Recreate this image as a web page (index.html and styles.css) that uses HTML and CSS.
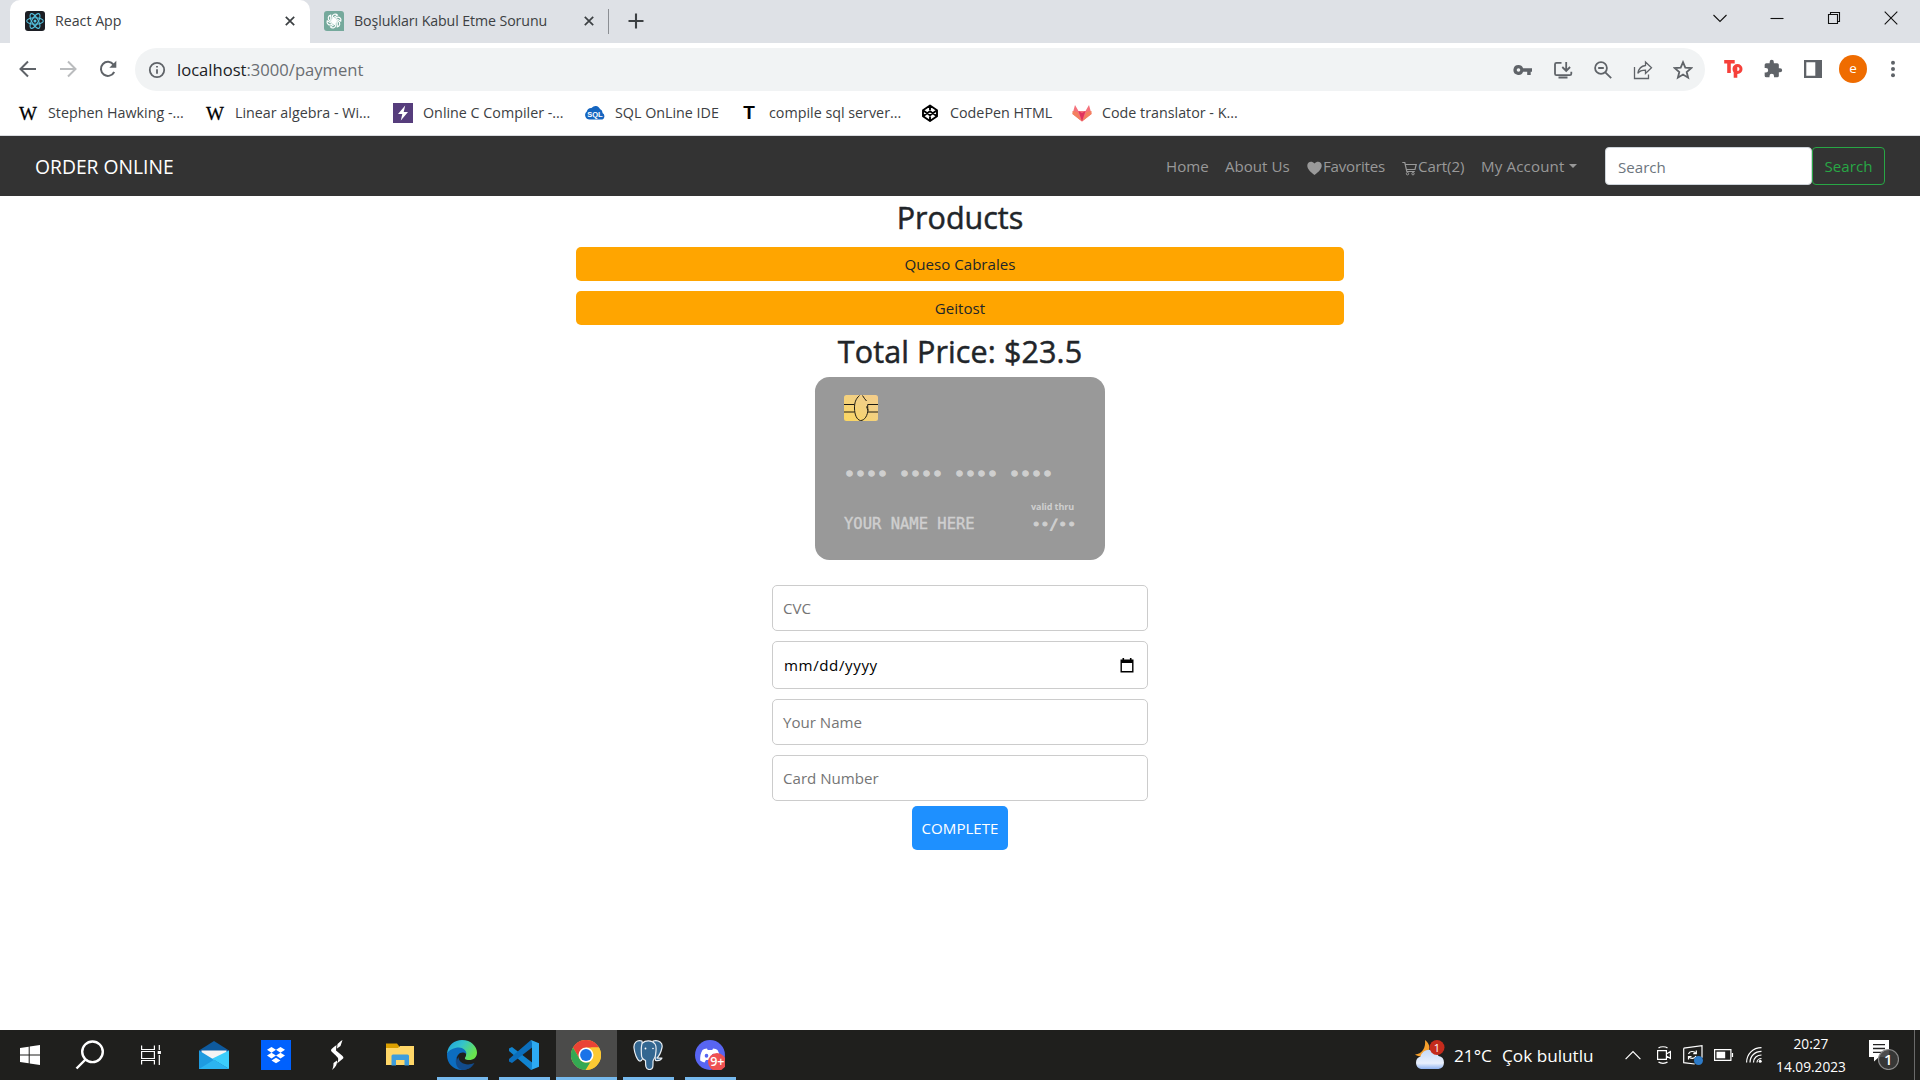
FILE: index.html
```html
<!DOCTYPE html>
<html lang="en">
<head>
<meta charset="utf-8">
<title>React App</title>
<link rel="stylesheet" href="styles.css">
</head>
<body>
<div class="tabstrip">
  <div class="tab active">
    <svg class="fav" viewBox="0 0 20 20"><rect width="20" height="20" rx="3" fill="#1c1e24"/><g fill="none" stroke="#53c1de" stroke-width="1.1"><ellipse cx="10" cy="10" rx="8.3" ry="3.2"/><ellipse cx="10" cy="10" rx="8.3" ry="3.2" transform="rotate(60 10 10)"/><ellipse cx="10" cy="10" rx="8.3" ry="3.2" transform="rotate(120 10 10)"/></g><circle cx="10" cy="10" r="1.5" fill="#53c1de"/></svg>
    <span class="tab-title">React App</span>
    <svg class="x" viewBox="0 0 10 10"><path d="M.8.8l8.4 8.4M9.2.8L.8 9.2"/></svg>
  </div>
  <div class="tab second">
    <svg class="fav" viewBox="0 0 20 20"><path d="M3 0h14a3 3 0 0 1 3 3v17H3a3 3 0 0 1-3-3V3a3 3 0 0 1 3-3z" fill="#75a99c"/><g fill="none" stroke="#fff" stroke-width="1.15"><path id="k" d="M8.2 11.1V6.2a3 3 0 0 1 5.3-2l-4 2.4v4.7"/><use href="#k" transform="rotate(60 10 10)"/><use href="#k" transform="rotate(120 10 10)"/><use href="#k" transform="rotate(180 10 10)"/><use href="#k" transform="rotate(240 10 10)"/><use href="#k" transform="rotate(300 10 10)"/></g></svg>
    <span class="tab-title">Boşlukları Kabul Etme Sorunu</span>
    <svg class="x" viewBox="0 0 10 10"><path d="M.8.8l8.4 8.4M9.2.8L.8 9.2"/></svg>
  </div>
  <span class="tab-sep"></span>
  <svg class="plus" viewBox="0 0 16 16"><path d="M8 .5v15M.5 8h15"/></svg>
  <div class="winctl">
    <svg viewBox="0 0 14 14"><path d="M.5 4L7 10.500 13.500 4"/></svg>
    <svg viewBox="0 0 14 14"><path d="M.5 7.500h13"/></svg>
    <svg viewBox="0 0 14 14"><path d="M1.500 3.500h9v9h-9zM3.500 3.500v-2h9v9h-2"/></svg>
    <svg viewBox="0 0 14 14"><path d="M.7.700l12.600 12.600M13.300.7L.7 13.300"/></svg>
  </div>
</div>
<div class="toolbar">
  <svg class="nav-ic" viewBox="0 0 20 20"><path d="M18 10H3M10 2.500L2.500 10l7.500 7.500"/></svg>
  <svg class="nav-ic off" viewBox="0 0 20 20"><path d="M2 10h15M10 2.500l7.500 7.500-7.500 7.500"/></svg>
  <svg class="nav-ic" viewBox="0 0 20 20"><path d="M16.200 13A7 7 0 1 1 15.500 5.600"/><path d="M18.300 1.800v7h-7z" fill="#5f6368" stroke="none"/></svg>
  <div class="omnibox">
    <svg class="info" viewBox="0 0 18 18"><circle cx="9" cy="9" r="7.200"/><path d="M9 8.200v4.500M9 5v1.600"/></svg>
    <span class="url"><b>localhost</b>:3000/payment</span>
    <div class="omni-actions">
      <svg viewBox="0 0 20 20"><path d="M5.500 5a5 5 0 0 1 4.600 3.200H19v3.600h-1.300V15h-3.500v-3.200h-4.100A5 5 0 1 1 5.500 5zm0 3.200a1.800 1.800 0 1 0 0 3.600 1.800 1.800 0 0 0 0-3.600z" fill="#5f6368" stroke="none" fill-rule="evenodd"/></svg>
      <svg viewBox="0 0 20 20"><path d="M8.500 2.800H3.500a1.500 1.500 0 0 0-1.500 1.500v9.400a1.500 1.500 0 0 0 1.500 1.500h13.300a1.500 1.500 0 0 0 1.500-1.500v-2M13.200 2v8M9.300 7l3.900 3.900L17.100 7M5.500 17.500h9"/></svg>
      <svg viewBox="0 0 20 20"><circle cx="8" cy="8" r="5.900"/><path d="M12.300 12.300l5.900 5.900M5.200 8h5.600"/></svg>
      <svg viewBox="0 0 20 20" class="thin"><path d="M1.500 7v11.500h14v-4M12.500 2l6 5.800-6 5.700v-3.400c-3.500 0-6 .7-7.700 3.200.7-4 3.200-7.200 7.700-7.800z"/></svg>
      <svg viewBox="0 0 20 20"><path d="M10 2.200l2.300 5.400 5.900.5-4.500 3.900 1.400 5.700L10 14.600l-5.100 3.100L6.300 12 1.800 8.100l5.900-.5z"/></svg>
    </div>
  </div>
  <svg class="ext" viewBox="0 0 20 20"><path d="M1.200 2.800h10.500M6 2.800V14M12.500 18.800V7" stroke="#f6403a" stroke-width="3.600" fill="none"/><circle cx="14.500" cy="10" r="3.500" stroke="#f6403a" stroke-width="3" fill="none"/></svg>
  <svg class="ext" viewBox="0 0 24 24"><path fill="#5f6368" d="M20.500 11H19V7a2 2 0 0 0-2-2h-4V3.500a2.500 2.500 0 0 0-5 0V5H4a2 2 0 0 0-2 2v3.800h1.500a2.700 2.700 0 0 1 0 5.400H2V20a2 2 0 0 0 2 2h3.800v-1.500a2.700 2.700 0 0 1 5.400 0V22H17a2 2 0 0 0 2-2v-4h1.500a2.500 2.500 0 0 0 0-5z"/></svg>
  <svg class="ext" viewBox="0 0 20 20"><path fill="#5f6368" fill-rule="evenodd" d="M1 1h18v18H1zm2.300 2.300v13.400h9V3.300z"/></svg>
  <span class="avatar">e</span>
  <svg class="ext" viewBox="0 0 20 20"><g fill="#5f6368"><circle cx="10" cy="3.700" r="2"/><circle cx="10" cy="10" r="2"/><circle cx="10" cy="16.300" r="2"/></g></svg>
</div>
<div class="bookmarks">
  <div class="bm b1"><span class="bi wiki">W</span><span class="bt">Stephen Hawking -...</span></div>
  <div class="bm b2"><span class="bi wiki">W</span><span class="bt">Linear algebra - Wi...</span></div>
  <div class="bm b3"><svg class="bi" viewBox="0 0 20 20"><path fill="#563d7c" d="M0 0h20v20H0z"/><path fill="#fff" d="M12.200 2.500L5 11h4.300l-1.500 6.500L15 9h-4.300z"/></svg><span class="bt">Online C Compiler -...</span></div>
  <div class="bm b4"><svg class="bi" viewBox="0 0 20 20"><path fill="#1565c0" d="M4.500 16.500a4.500 4.500 0 0 1-2.700-8A4.500 4.500 0 0 1 6.500 5a5 5 0 0 1 8.500 1 4 4 0 0 1 2.500 4 3.700 3.700 0 0 1 0 6.500z"/><text x="10" y="14" text-anchor="middle" class="sqltxt">SQL</text></svg><span class="bt">SQL OnLine IDE</span></div>
  <div class="bm b5"><span class="bi tee">T</span><span class="bt">compile sql server...</span></div>
  <div class="bm b6"><svg class="bi" viewBox="0 0 20 20"><path d="M10 2.500l7 4.800v5.900l-7 4.800-7-4.800V7.300zM10 2.500v4.500M10 13.400v4.400M3 7.300l7 5 7-5M3 13.200l7-5 7 5" fill="none" stroke="#000" stroke-width="1.900" stroke-linejoin="round"/></svg><span class="bt">CodePen HTML</span></div>
  <div class="bm b7"><svg class="bi" viewBox="0 0 20 20"><path fill="#f4717b" d="M3 2l3.500 6h7L17 2l2.500 9L10 18.500.5 11z"/><path fill="#f3805f" d="M.5 8l5 1L10 18.500.5 11zM19.500 8l-5 1L10 18.500l9.500-7.500z"/><path fill="#e0325e" d="M6.500 8L10 10l3.500-2L10 18.500z"/></svg><span class="bt">Code translator - K...</span></div>
</div>
<nav class="navbar">
  <span class="brand">ORDER ONLINE</span>
  <div class="links">
    <a class="l1">Home</a>
    <a class="l2">About Us</a>
    <a class="l3"><svg viewBox="0 0 15 16"><path fill="#999" d="M7.500 15C3 11.500.3 9 .3 5.500.3 1.500 5 .5 7.500 3.500 10 .5 14.700 1.500 14.700 5.500c0 3.500-2.700 6-7.200 9.500z"/></svg><span>Favorites</span></a>
    <a class="l4"><svg viewBox="0 0 15 16"><path fill="none" stroke="#999" stroke-width="1.200" d="M.3 2.500h2.500l2 9h8M3.300 4.500h10.900l-1.200 5H4.500"/><circle cx="5.500" cy="13.700" r="1.200" fill="none" stroke="#999"/><circle cx="11" cy="13.700" r="1.200" fill="none" stroke="#999"/></svg><span>Cart(2)</span></a>
    <a class="l5"><span>My Account</span><i class="caret"></i></a>
  </div>
  <div class="search"><span class="s-in">Search</span><span class="s-btn">Search</span></div>
</nav>
<main class="page">
  <h2 class="h-prod">Products</h2>
  <div class="bar">Queso Cabrales</div>
  <div class="bar">Geitost</div>
  <h2 class="h-total">Total Price: $23.5</h2>
  <div class="card">
    <svg class="chip" viewBox="0 0 34 26"><defs><linearGradient id="cg" x1="0" y1="1" x2="1" y2="0"><stop offset="0" stop-color="#fcd75f"/><stop offset=".6" stop-color="#f2d083"/><stop offset="1" stop-color="#f5cd8a"/></linearGradient></defs><rect width="34" height="26" rx="2.500" fill="url(#cg)"/><path d="M0 9.500h10.500M0 17h10.500M34 9.500H23.700V13M34 17H24M15.500.5C11.500 4 10.500 8 10.500 13c0 7 2.500 12 6 12.500 4 .2 7.500-5 7.500-12M18.500.5c1 2 2.500 3.500 4 5.500M22.500 11.500l1.500 4" fill="none" stroke="#1c1a12" stroke-width="1"/></svg>
    <div class="number">•••• •••• •••• ••••</div>
    <div class="card-row">
      <span class="name">YOUR NAME HERE</span>
      <span class="expiry"><small>valid thru</small><span>••/••</span></span>
    </div>
  </div>
  <form class="form">
    <div class="field"><span>CVC</span></div>
    <div class="field date"><span>mm/dd/yyyy</span><svg viewBox="0 0 14 15"><path fill="#000" fill-rule="evenodd" d="M2.500 0h1.600v1.500h5.800V0h1.600v1.500h2v13H.5v-13h2zM1.900 5v8.100h10.200V5z"/></svg></div>
    <div class="field"><span>Your Name</span></div>
    <div class="field"><span>Card Number</span></div>
    <div class="submit"><span>COMPLETE</span></div>
  </form>
</main>
<footer class="taskbar">
  <div class="slot"><svg class="w20" viewBox="0 0 20 20"><path fill="#fff" d="M0 3l8.700-1.300v7.800H0zM9.700 1.500L20 0v9.500H9.700zM0 10.500h8.700v7.800L0 17zM9.700 10.500H20V20L9.700 18.500z"/></svg></div>
  <div class="slot"><svg class="w30" viewBox="0 0 30 30"><g fill="none" stroke="#fff" stroke-width="2.400"><circle cx="17.500" cy="11.800" r="10.300"/><path d="M10.500 19.500L1.500 28.500"/></g></svg></div>
  <div class="slot left"><svg class="w20" viewBox="0 0 20 20"><g fill="none" stroke="#fff" stroke-width="1.200"><path d="M.6.500v4h12.800v-4M.6 19.500v-4h12.800v4M.6 6.500h12.800v7H.6zM18.300 0v5M18.300 10v10"/></g><path fill="#fff" d="M16.700 6h3.200v3h-3.200z"/></svg></div>
  <div class="slot"><svg class="w30" viewBox="0 0 30 30"><path fill="#0e5a9e" d="M0 10.500L15 1l15 9.500V20H0z"/><path fill="#f4f4f4" d="M2.500 10.500h25v9h-25z"/><path fill="#1e9be0" d="M0 10.500L30 29H0z"/><path fill="#3bcdfb" d="M30 10.500V29L13 18.700z"/><path fill="#2cb4f0" d="M15 19.800L30 29H0z"/></svg></div>
  <div class="slot"><svg class="w30" viewBox="0 0 30 30"><path fill="#0061fe" d="M0 0h30v30H0z"/><path fill="#fff" d="M10.500 7l4.500 2.800-4.500 2.900L6 9.800zM19.500 7L24 9.800l-4.500 2.900L15 9.800zM10.500 12.700l4.500 2.800-4.500 2.900L6 15.500zM19.500 12.700l4.500 2.800-4.500 2.900-4.500-2.900zM15 17.800l4.500 2.600L15 23.300l-4.500-2.900z"/></svg></div>
  <div class="slot left"><svg class="w30" viewBox="0 0 30 30"><path fill="#fff" d="M20.500 0C19 1 17 2.500 15.500 4l-.5 4.500 3.500-2.500zM14.500 5C11 7.500 9 9 9 10.500c0 1.200 6 5.500 7 7.500.5 1.500 0 3.500-1 5.500l5.500-4.500c1.500-1.200 1-2-.5-3.500l-6-5zM10 30c4-3 5.300-6 5-9.500l-3.500 2.500C11.500 26 11 28 10 30z"/></svg></div>
  <div class="slot"><svg class="w30" viewBox="0 0 30 30"><path fill="#dca000" d="M1 3.500h11l2 2.500v5H1z"/><path fill="#ffd768" d="M1 8h12l2-2h14v19H1z"/><path fill="#3e9ddc" d="M6.500 25.500V16q0-1.500 1.500-1.500h14.500q1.500 0 1.500 1.500v9.500h-4.500v-5.500h-8.500v5.500z"/></svg></div>
  <div class="slot on"><svg class="w30" viewBox="0 0 30 30"><defs><linearGradient id="e1" x1="0" y1="0" x2="1" y2=".5"><stop offset="0" stop-color="#1b9de2"/><stop offset=".5" stop-color="#35c4c9"/><stop offset="1" stop-color="#69e44d"/></linearGradient></defs><path fill="url(#e1)" d="M0 13.500C1 5 7.500 0 15 0c9 0 15 6.500 15 12.500 0 5-3.500 7.500-8 7.500-3.500 0-5-1.300-3.500-3 2-3-.5-7-5.500-7-6 0-11 3-13 3.500z"/><path fill="#0c6dc0" d="M0 13.500C2 10 7 7.500 12 7.500c4 0 7.500 3 7.500 6.500-5-4-10 .5-10 5.500 0 6 5 9.500 8.500 10.300C8 31.500 0 24.500 0 15z"/><path fill="#164e8e" d="M12.500 13.500c-4 3-3.500 9 0 12.500s10 4 15.500-2.500C24.500 28 19 30.500 15 30 8 29 6.500 17.500 12.500 13.500z"/><path fill="#124b8c" d="M11.500 17c0 6 8 9.500 16 6-3 5-8 7-11.500 7-6-1-8-9-4.500-13z"/></svg></div>
  <div class="slot on"><svg class="w30" viewBox="0 0 30 30"><path fill="#1184d0" d="M0 8.500L3 7l22 17-3 6L0 11z"/><path fill="#0b6ebc" d="M0 21.500L3 23 25 6l-3-6L0 19z"/><path fill="#2daaf2" d="M22 0l8 3.200v23.600L22 30l1-3V3z"/></svg></div>
  <div class="slot on current"><svg class="w30" viewBox="0 0 30 30"><circle cx="15" cy="15" r="15" fill="#fcc934"/><path fill="#ea4335" d="M2 7.500A15 15 0 0 1 28 7.500H15L8.500 18.700z"/><path fill="#34a853" d="M2 7.500l6.500 11.200c2 3.500 4.500 4 8 3.800H21.500L15 30A15 15 0 0 1 2 7.500z"/><path fill="#fcc934" d="M28 7.500A15 15 0 0 1 14.500 30l7-11.200c1.500-3 1.500-7-1.500-11.300z"/><circle cx="15" cy="15" r="7.500" fill="#fff"/><circle cx="15" cy="15" r="5.900" fill="#1a73e8"/></svg></div>
  <div class="slot on"><svg class="w30" viewBox="0 0 30 30"><g fill="#336791" stroke="#e8eef3" stroke-width="1.200" stroke-linejoin="round"><path d="M9 1C3.500-.5.500 3 1 8c.5 5 3 12 5.500 13 2 .8 3-2 4-4z"/><path d="M20 1c6-1.500 10 2 9 6.500-1 5-4 9.500-5 10.500 1.500.5 3.500 0 5 0-1 2-4 3-6.500 2.500z"/><path d="M9.500 3c3-3 9.500-3 12.500 1 1.500 2 1 8 .5 11-.5 4-2.500 4-2.500 6.500 0 4 .5 8-3.500 8s-4-4-4-9c-2-1-4-2.500-4-5s-1-9.500 1-12.500z"/></g><circle cx="12.500" cy="8.500" r=".9" fill="#fff"/><circle cx="20" cy="8.500" r=".8" fill="#fff"/></svg></div>
  <div class="slot on"><svg class="w30" viewBox="0 0 30 30"><circle cx="15" cy="15" r="15" fill="#5865f2"/><path fill="#fff" d="M12 8.500c-2 .3-3.500.8-4.500 1.500C5.500 13 5 17 5.200 20.500c1.300 1 2.800 1.500 4.300 2l1.500-2.500h8l1.500 2.500c1.500-.5 3-1 4.300-2 .2-3.500-.3-7.500-2.300-10.500-1-.7-2.500-1.200-4.500-1.500l-.7 1.500h-4.600z"/><ellipse cx="11.500" cy="15.800" rx="1.800" ry="2" fill="#5865f2"/><ellipse cx="18.500" cy="15.800" rx="1.800" ry="2" fill="#5865f2"/><circle cx="22" cy="22" r="9" fill="#ee5152"/><text x="22.300" y="26.300" text-anchor="middle" class="nine">9+</text></svg></div>
  <div class="tray">
    <svg class="weather" viewBox="0 0 32 30"><defs><linearGradient id="cl" x1="0" y1="0" x2="0" y2="1"><stop offset="0" stop-color="#c5daf8"/><stop offset=".7" stop-color="#e9f0fd"/><stop offset="1" stop-color="#8eb2f0"/></linearGradient></defs><path fill="#f6a02c" d="M11 0c6 4 6 12-1 16-4 1-7 0-9-1.500C8 14 12 8 11 0z"/><path fill="url(#cl)" d="M7 29a6.500 6.500 0 0 1-.5-12.500A9.500 9.500 0 0 1 24.500 16 6.600 6.600 0 0 1 24.500 29z"/><circle cx="23" cy="7.500" r="7.500" fill="#c42b1c"/><text x="23" y="11.500" text-anchor="middle" class="one">1</text></svg>
    <span class="temp">21°C</span><span class="cond">Çok bulutlu</span>
    <svg class="chev" viewBox="0 0 16 10"><path d="M.6 9.200L8 1.500l7.400 7.700"/></svg>
    <svg class="meet" viewBox="0 0 14 18"><path d="M.6 4.700h8.800v8.600H.6zM9.400 8l4-2.500v7l-4-2.500M1.500 2C3.500.3 8.500.3 10.500 2M1.500 16c2 1.700 7 1.700 9 0"/></svg>
    <svg class="sync" viewBox="0 0 20 20"><path d="M.7 3.200L19 .7v12M.7 3.200v14.500l11 1.300M5.500 9C6.500 6 11 5.500 13 8.500M13.300 5.500v3.200h-3M13 11c-1.500 3-5.500 3.200-7.200.5M5.500 14.500v-3h3"/><circle cx="15.500" cy="15.500" r="4.500" fill="#2d7bc8" stroke="none"/></svg>
    <svg class="batt" viewBox="0 0 20 12"><path d="M.6.700h16.300v10.600H.6zM18.500 4v4"/><path d="M2.500 2.700h8.700v6.600H2.500z" fill="#fff" stroke="none"/></svg>
    <svg class="wifi" viewBox="0 0 16 16"><path d="M.6 15.500C.6 7 7 .6 15.500.6M4 15.500C4 9 9 4.300 15.500 4.300M7.500 15.500c0-4.500 3.500-7.500 8-7.500M11 15.500c0-2.300 2-4 4.500-4"/><circle cx="14.200" cy="14.200" r="1.500" fill="#fff" stroke="none"/></svg>
    <div class="clock"><span>20:27</span><span>14.09.2023</span></div>
    <svg class="act" viewBox="0 0 30 30"><path fill="#fff" d="M0 0h20v17H10l-5 4.500V17H0z"/><path d="M4 4.700h12M4 8.500h12M4 12.300h9" stroke="#222" stroke-width="1.300"/><circle cx="19.500" cy="19.500" r="10" fill="#3a3a3a" fill-opacity=".9" stroke="#8a8a8a"/><text x="19.300" y="25" text-anchor="middle" class="cnt">1</text></svg>
    <span class="desk"></span>
  </div>
</footer>
</body>
</html>
```
FILE: styles.css
```css
* { box-sizing: border-box; }
body {
  margin: 0;
  width: 1920px;
  height: 1080px;
  overflow: hidden;
  display: flex;
  flex-direction: column;
  background: #fff;
  font-family: "Open Sans", "Noto Sans", sans-serif;
  color: #212529;
}
svg { display: block; flex: none; }
span { white-space: nowrap; }

/* tab strip */
.tabstrip { height: 43px; flex: none; display: flex; background: #dee1e6; padding-left: 10px; }
.tab { width: 299px; height: 43px; display: flex; align-items: center; padding: 0 14px 2px 14px; font-size: 14.2px; color: #3c4043; }
.tab.active { width: 300px; padding-left: 15px; background: #fff; border-radius: 10px 10px 0 0; }
.second .tab-title { letter-spacing: -0.1px; }
.fav { width: 20px; height: 20px; margin-right: 10px; }
.x { width: 10px; height: 10px; margin-left: auto; margin-right: 1px; stroke: #3c4043; stroke-width: 1.7; fill: none; }
.tab-sep { width: 1px; height: 25px; margin: 9px 19px 0 -1px; background: #8b8e93; }
.plus { width: 16px; height: 16px; margin-top: 13px; stroke: #3c4043; stroke-width: 2.1; }
.winctl { margin-left: auto; margin-right: 22px; padding-top: 11px; display: flex; gap: 43px; }
.winctl svg { width: 14px; height: 14px; fill: none; stroke: #111; stroke-width: 1.1; }

/* toolbar */
.toolbar { height: 52px; flex: none; display: flex; align-items: center; padding: 0 17px 0 18px; }
.nav-ic { width: 20px; height: 20px; margin-right: 20px; fill: none; stroke: #5f6368; stroke-width: 2; }
.nav-ic.off { stroke: #babcbe; }
.nav-ic:nth-child(3) { margin-right: 17px; }
.omnibox { width: 1570px; height: 43px; flex: none; margin-top: 1px; border-radius: 22px; background: #f1f3f4; display: flex; align-items: center; padding: 0 12px 0 13px; }
.info { width: 18px; height: 18px; fill: none; stroke: #5f6368; stroke-width: 1.8; }
.url { margin-left: 11px; font-size: 16.6px; color: #6a6e72; }
.url b { font-weight: 400; color: #202124; }
.omni-actions { margin-left: auto; display: flex; gap: 20px; }
.omni-actions svg { width: 20px; height: 20px; fill: none; stroke: #5f6368; stroke-width: 1.8; }
.omni-actions .thin { stroke-width: 1.3; }
.ext { width: 20px; height: 20px; margin-left: 20px; }
.omnibox + .ext { margin-left: 18px; }
.avatar { width: 28px; height: 28px; flex: none; margin: 0 -4px 0 16px; border-radius: 50%; background: #ef6c00; color: #fff; font-size: 13.5px; line-height: 26px; text-align: center; }

/* bookmarks */
.bookmarks { height: 41px; flex: none; display: flex; align-items: center; padding: 0 0 5px 18px; border-bottom: 1px solid #dadce0; font-size: 14.3px; color: #3c4043; }
.bm { display: flex; align-items: center; gap: 10px; }
.bt { margin-top: -1px; }
.bi { width: 20px; height: 20px; flex: none; line-height: 20px; text-align: center; color: #000; }
.wiki { font: 19px/21px "Liberation Serif", serif; -webkit-text-stroke: 0.3px #000; }
.tee { font: 700 19px/20px "Liberation Sans", sans-serif; }
.sqltxt { font: 700 7.5px "Liberation Sans", sans-serif; fill: #fff; }
.b1 { width: 187px; }
.b2 { width: 188px; }
.b3 { width: 192px; }
.b4 { width: 154px; }
.b5 { width: 181px; }
.b6 { width: 152px; }

/* site navbar */
.navbar { height: 60px; flex: none; background: #333; display: flex; align-items: center; padding: 0 35px; }
.brand { color: #fff; font-size: 19.3px; }
.links { margin-left: auto; display: flex; color: #999; font-size: 15.1px; }
.links a { display: flex; align-items: center; white-space: nowrap; }
.links svg { width: 15px; height: 16px; margin: 3px 1px 0 0; }
.l1 { width: 59px; }
.l2 { width: 82px; }
.l3 { width: 95px; }
.l3 span { letter-spacing: -0.2px; }
.l4 { width: 79px; }
.l4 span { letter-spacing: -0.1px; }
.l5 { width: 124px; }
.l5 span { letter-spacing: 0.15px; }
.caret { margin-left: 4px; border: 4.5px solid transparent; border-top-color: #999; border-bottom: 0; }
.search { display: flex; font-size: 15.1px; }
.s-in { width: 207px; height: 38px; line-height: 38px; border: 1px solid #ced4da; border-radius: 4px; background: #fff; color: #6c757d; padding-left: 12px; }
.s-btn { width: 73px; height: 38px; line-height: 36px; border: 1px solid #28a745; border-radius: 4px; color: #28a745; text-align: center; }

/* page */
.page { flex: 1; display: flex; flex-direction: column; align-items: center; }
h2 { margin: 0; font-size: 30.5px; font-weight: 500; line-height: 38px; height: 51px; padding-top: 2px; white-space: nowrap; -webkit-text-stroke: 0.5px #212529; }
.bar { width: 768px; height: 34px; margin-bottom: 10px; border-radius: 5px; background: orange; font-size: 15.1px; line-height: 34px; text-align: center; }
.h-total { height: 42px; margin-top: -4px; padding-top: 1px; letter-spacing: 0.1px; }
.card { width: 290px; height: 183px; margin-top: 4px; border-radius: 14.5px; background: #999; padding: 18px 28px 0 29px; color: #cfcfcf; display: flex; flex-direction: column; }
.chip { width: 34px; height: 26px; }
.number { margin-top: 40px; height: 26px; font: 18.3px/26px "DejaVu Sans Mono", monospace; white-space: pre; -webkit-text-stroke: 1.3px #cfcfcf; }
.card-row { margin-top: 13px; display: flex; justify-content: space-between; align-items: flex-end; font: 15.5px/19px "DejaVu Sans Mono", monospace; }
.name { -webkit-text-stroke: 0.4px #cfcfcf; margin-bottom: -1px; }
.expiry { display: flex; flex-direction: column; align-items: flex-end; }
.expiry small { font: 700 9px/14px "Open Sans", sans-serif; margin-right: 3px; letter-spacing: -0.1px; }
.expiry > span { font-size: 14.7px; margin-right: 1px; -webkit-text-stroke: 0.9px #cfcfcf; }
.form { width: 376px; margin-top: 25px; display: flex; flex-direction: column; align-items: center; font-size: 15.1px; }
.field { width: 376px; height: 46px; margin-bottom: 10px; border: 1px solid #ccc; border-radius: 5px; padding: 0 13px 0 10px; display: flex; align-items: center; justify-content: space-between; color: #757575; }
.field.date { height: 48px; padding-left: 11px; color: #000; letter-spacing: 0.6px; }
.field svg { width: 14px; height: 15px; }
.submit { width: 96px; height: 44px; margin-top: -5px; border-radius: 5px; background: #1e90ff; color: #fff; line-height: 44px; text-align: center; }

/* taskbar */
.taskbar { height: 50px; flex: none; display: flex; background: #1f1f1d; }
.slot { width: 62px; height: 50px; flex: none; display: flex; align-items: center; justify-content: center; }
.slot:first-child { width: 59px; }
.slot.left { padding-right: 3px; }
.slot.on { background: linear-gradient(#76b9ed, #76b9ed) center bottom / 51px 3px no-repeat; }
.slot.current { background: linear-gradient(#76b9ed, #76b9ed) center bottom / 61px 3px no-repeat, linear-gradient(#4b4b4a, #4b4b4a) center / 61px 50px no-repeat; }
.w20 { width: 20px; height: 20px; }
.w30 { width: 30px; height: 30px; }
.nine { font: 600 12.5px "Open Sans", sans-serif; fill: #fff; }
.one { font: 11px "Open Sans", sans-serif; fill: #fff; }
.cnt { font: 600 15px "Open Sans", sans-serif; fill: #fff; }
.tray { margin-left: auto; display: flex; align-items: center; color: #fff; }
.tray svg { fill: none; stroke: #fff; stroke-width: 1.2; }
.tray svg text { stroke: none; fill: #fff; }
.tray .weather, .tray .act { stroke: none; }
.weather { width: 32px; height: 30px; }
.temp { width: 48px; margin-left: 8px; font-size: 17.2px; }
.cond { width: 123px; font-size: 17.2px; }
.chev { width: 16px; height: 10px; margin-right: 16px; }
.meet { width: 14px; height: 18px; margin-right: 12px; }
.sync { width: 20px; height: 20px; margin-right: 11px; }
.batt { width: 20px; height: 12px; margin-right: 12px; }
.wifi { width: 16px; height: 16px; }
.clock { width: 90px; margin: 0 7px 0 4px; display: flex; flex-direction: column; align-items: center; font-size: 13.7px; line-height: 23px; }
.act { width: 30px; height: 30px; margin: 0 15px 0 6px; }
.desk { width: 6px; height: 50px; border-left: 1px solid #6a6a6a; }
```
